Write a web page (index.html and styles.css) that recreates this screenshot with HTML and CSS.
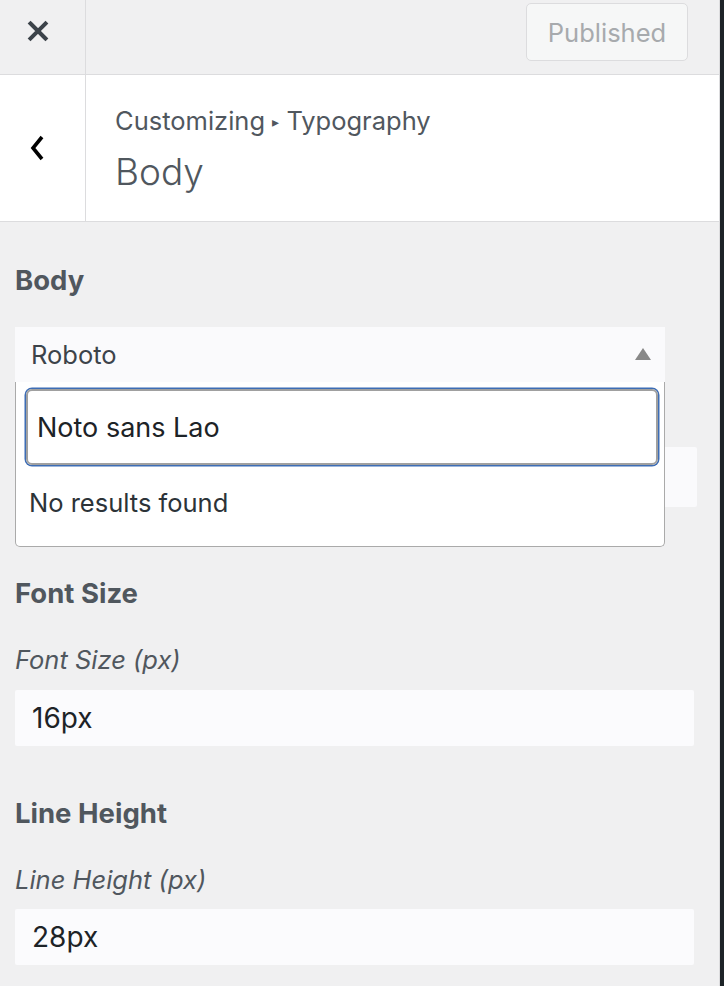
FILE: index.html
```html
<!DOCTYPE html>
<html lang="en">
<head>
<meta charset="utf-8">
<title>Customizer</title>
<link rel="stylesheet" href="styles.css">
</head>
<body>
<div class="app">
  <div class="panel">
    <div class="topbar">
      <button class="close-btn" aria-label="Close">
        <svg width="22" height="22" viewBox="0 0 22 22"><path d="M3.5 3.5 L18.5 18.5 M18.5 3.5 L3.5 18.5" stroke="#3c434a" stroke-width="4" stroke-linecap="square" fill="none"/></svg>
      </button>
      <div class="topbar-fill">
        <button class="publish-btn">Published</button>
      </div>
    </div>
    <div class="header">
      <button class="back-btn" aria-label="Back">
        <svg width="18" height="26" viewBox="0 0 18 26"><path d="M14 2 L5 13 L14 24" stroke="#000" stroke-width="3.6" fill="none"/></svg>
      </button>
      <div class="titles">
        <div class="crumb">Customizing <span class="crumb-arrow">▸</span> Typography</div>
        <h1 class="panel-title">Body</h1>
      </div>
    </div>
    <div class="content">
      <section class="control">
        <h3 class="control-title">Body</h3>
        <div class="select-area">
          <div class="select">
            <span>Roboto</span>
            <span class="tri"></span>
          </div>
          <div class="sub-field"></div>
          <div class="dropdown">
            <div class="search">Noto sans Lao</div>
            <div class="no-results">No results found</div>
          </div>
        </div>
      </section>
      <section class="control control-fs">
        <h3 class="control-title">Font Size</h3>
        <div class="field-label">Font Size (px)</div>
        <div class="input">16px</div>
      </section>
      <section class="control control-lh">
        <h3 class="control-title">Line Height</h3>
        <div class="field-label">Line Height (px)</div>
        <div class="input">28px</div>
      </section>
    </div>
  </div>
  <div class="edge"></div>
</div>
</body>
</html>
```
FILE: styles.css
```css
* { box-sizing: border-box; }
html, body { margin: 0; padding: 0; }
body {
  font-family: Inter, Roboto, "Liberation Sans", sans-serif;
  background: #f0f0f1;
  color: #50575e;
}
.app {
  display: flex;
  width: 724px;
  height: 986px;
  overflow: hidden;
}
.panel {
  width: 720px;
  border-right: 1px solid #dcdcde;
  background: #f0f0f1;
  display: flex;
  flex-direction: column;
}
.edge {
  width: 4px;
  background: #1d2327;
}
button {
  font-family: inherit;
  background: none;
  border: 0;
  padding: 0;
  margin: 0;
}
.topbar {
  height: 75px;
  display: flex;
  border-bottom: 1px solid #dcdcde;
  background: #f0f0f1;
}
.close-btn {
  width: 86px;
  border-right: 1px solid #dcdcde;
  display: flex;
  align-items: flex-start;
  justify-content: center;
  padding-top: 20px;
  padding-right: 10px;
}
.topbar-fill {
  flex: 1;
  display: flex;
  justify-content: flex-end;
  align-items: flex-start;
  padding-top: 3px;
  padding-right: 31px;
}
.publish-btn {
  width: 162px;
  height: 58px;
  border: 1px solid #dcdcde;
  border-radius: 5px;
  background: #f6f7f7;
  color: #a7aaad;
  font-size: 25.5px;
  padding-top: 1px;
}
.header {
  height: 147px;
  display: flex;
  background: #fff;
  border-bottom: 1px solid #dcdcde;
}
.back-btn {
  width: 86px;
  border-right: 1px solid #dcdcde;
  display: flex;
  align-items: center;
  justify-content: center;
  padding-right: 12px;
}
.titles {
  padding-left: 29px;
  padding-top: 31px;
}
.crumb {
  font-size: 25.5px;
  line-height: 30px;
  color: #50575e;
}
.crumb-arrow {
  font-size: 14px;
  vertical-align: 3px;
}
.panel-title {
  margin: 13px 0 0;
  font-size: 37px;
  font-weight: 300;
  line-height: 44px;
  color: #50575e;
}
.content {
  padding: 0 26px 0 15px;
}
.control-title {
  margin: 0;
  font-size: 27.5px;
  font-weight: 700;
  line-height: 30px;
  color: #50575e;
}
.control:first-child .control-title { margin-top: 43px; }
.select-area {
  position: relative;
  margin-top: 32px;
}
.select {
  width: 650px;
  height: 55px;
  background: #fafafc;
  display: flex;
  align-items: center;
  justify-content: space-between;
  padding: 0 14px 0 16px;
  font-size: 25.5px;
  color: #3c434a;
}
.tri {
  width: 0;
  height: 0;
  border-left: 8px solid transparent;
  border-right: 8px solid transparent;
  border-bottom: 12px solid #888;
  margin-top: -2px;
}
.sub-field {
  margin-top: 65px;
  width: 682px;
  height: 60px;
  background: #fafafc;
  border-radius: 2px;
}
.dropdown {
  position: absolute;
  left: 0;
  top: 55px;
  width: 650px;
  height: 165px;
  background: #fff;
  border: 1px solid #aaa;
  border-top: 0;
  border-radius: 0 0 5px 5px;
  padding: 7px 6px 0 10px;
}
.search {
  height: 76px;
  border: 2px solid #a0a0a0;
  border-radius: 6px;
  box-shadow: 0 0 0 1.5px #3d6db5;
  display: flex;
  align-items: center;
  padding: 0 0 0 9px;
  font-size: 27px;
  color: #1d2327;
}
.no-results {
  margin-top: 23px;
  padding-left: 3px;
  font-size: 25.5px;
  line-height: 30px;
  color: #2c3338;
}
.control-fs .control-title { margin-top: 71px; }
.control-lh .control-title { margin-top: 52px; }
.field-label {
  margin-top: 37px;
  font-size: 25.5px;
  font-style: italic;
  line-height: 30px;
  color: #50575e;
}
.input {
  margin-top: 15px;
  width: 679px;
  height: 56px;
  background: #fbfbfd;
  border-radius: 2px;
  display: flex;
  align-items: center;
  padding-left: 17px;
  font-size: 28px;
  color: #1d2327;
}
.control-lh .field-label { margin-top: 37px; }
.control-lh .input { margin-top: 14px; }
```
